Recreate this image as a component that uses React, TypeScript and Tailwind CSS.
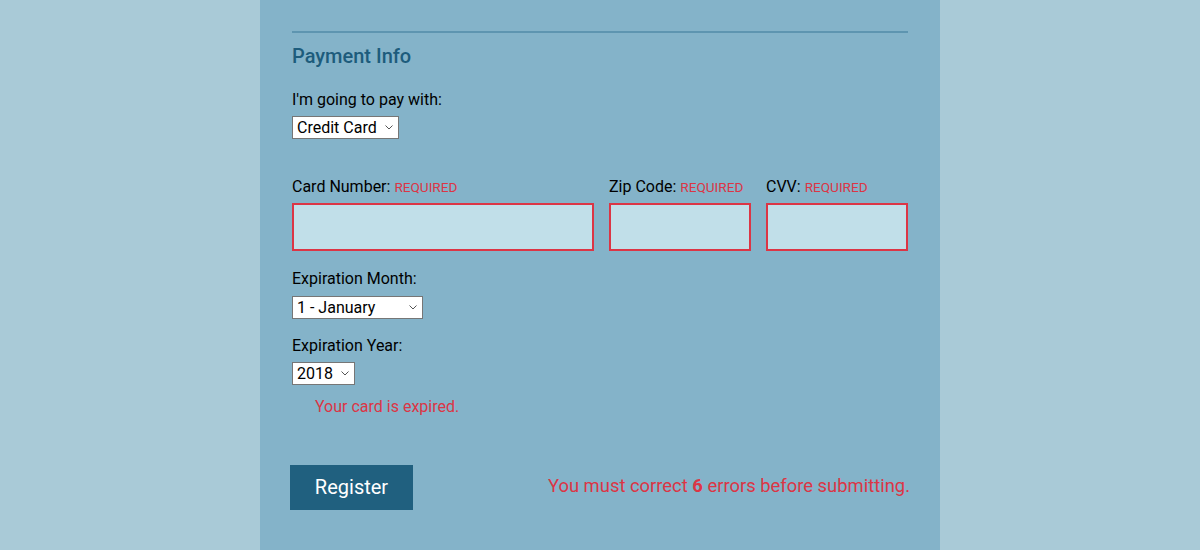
import React from "react"

const RED = "text-[#dc3545]"

function Req() {
  return <span className={`text-[13.6px] ${RED}`}>REQUIRED</span>
}

function Field({ label, className }: { label: string; className?: string }) {
  return (
    <div className={className}>
      <label className="block text-[16px] leading-[20px] mb-[6px]">
        {label} <Req />
      </label>
      <input
        type="text"
        className="block w-full h-[48px] bg-[#c1dfe9] border-2 border-[#dc3545] outline-none"
      />
    </div>
  )
}

function Select({ value, width, top = "mt-[6px]" }: { value: string; width: string; top?: string }) {
  return (
    <div className={`relative ${top} ${width}`}>
      <select className="appearance-none block w-full h-[23px] bg-white border border-[#767676] text-[16px] leading-[21px] pl-[4px] text-black outline-none">
        <option>{value}</option>
      </select>
      <svg
        className="absolute right-[6px] top-[9px] pointer-events-none"
        width="8"
        height="5"
        viewBox="0 0 8 5"
        fill="none"
      >
        <path d="M0.5 0.5 L4 4 L7.5 0.5" stroke="#555" strokeWidth="1" />
      </svg>
    </div>
  )
}

export default function App() {
  return (
    <div
      className="w-full h-[550px] bg-[#a9cad7] flex justify-center overflow-hidden text-black"
      style={{ fontFamily: "Roboto, 'Liberation Sans', sans-serif" }}
    >
      <div className="w-[680px] bg-[#84b3c9] px-[32px] pt-[31px]">
        <div className="h-[2px] bg-[#5e95b0]" />
        <h2 className="text-[20px] font-medium text-[#1d5c7c] mt-[10px] leading-[26px]">Payment Info</h2>

        <label className="block text-[16px] leading-[20px] mt-[21px]">I'm going to pay with:</label>
        <Select value="Credit Card" width="w-[107px]" />

        <div className="flex gap-[15px] mt-[38px]">
          <Field label="Card Number:" className="w-[302px]" />
          <Field label="Zip Code:" className="w-[142px]" />
          <Field label="CVV:" className="w-[142px]" />
        </div>

        <label className="block text-[16px] leading-[20px] mt-[18px]">Expiration Month:</label>
        <Select value="1 - January" width="w-[131px]" top="mt-[7px]" />

        <label className="block text-[16px] leading-[20px] mt-[17px]">Expiration Year:</label>
        <Select value="2018" width="w-[63px]" />
        <p className={`text-[16px] leading-[20px] mt-[12px] ml-[23px] ${RED}`}>Your card is expired.</p>

        <div className="flex items-center justify-between mt-[48px] -ml-[2px] -mr-[2px]">
          <button className="w-[123px] h-[45px] pb-[2px] bg-[#20607f] text-white text-[20px]">Register</button>
          <p className={`text-[18.4px] mb-[4px] ${RED}`}>
            You must correct <b>6</b> errors before submitting.
          </p>
        </div>
      </div>
    </div>
  )
}
